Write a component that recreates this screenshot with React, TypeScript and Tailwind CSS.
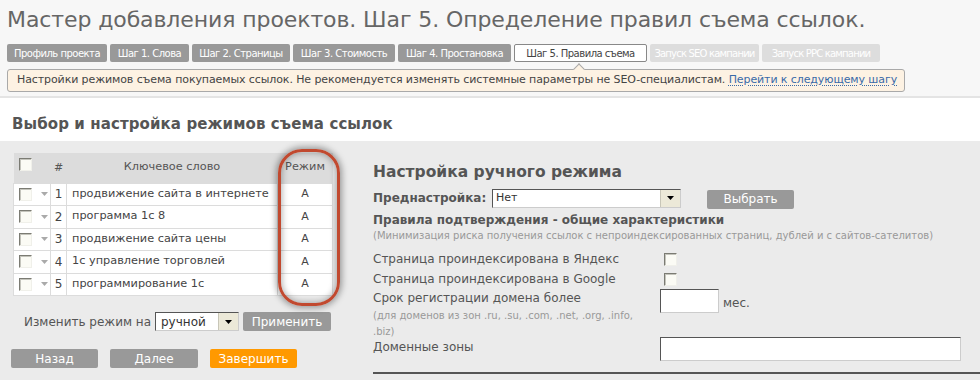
import React from "react";

const font = { fontFamily: '"DejaVu Sans", Verdana, sans-serif' };

const tabs = [
  { label: "Профиль проекта", w: "w-[100px]", kind: "done" },
  { label: "Шаг 1. Слова", w: "w-[79px]", kind: "done" },
  { label: "Шаг 2. Страницы", w: "w-[98px]", kind: "done" },
  { label: "Шаг 3. Стоимость", w: "w-[102px]", kind: "done" },
  { label: "Шаг 4. Простановка", w: "w-[113px]", kind: "done" },
  { label: "Шаг 5. Правила съема", w: "w-[133px]", kind: "active" },
  { label: "Запуск SEO кампании", w: "w-[109px]", kind: "off" },
  { label: "Запуск PPC кампании", w: "w-[118px]", kind: "off" },
];

const keywords = [
  "продвижение сайта в интернете",
  "программа 1с 8",
  "продвижение сайта цены",
  "1с управление торговлей",
  "программирование 1с",
];

function Box() {
  return (
    <span className="inline-block w-[13px] h-[13px] bg-[#fbfbf5] border border-t-[#7b7b73] border-l-[#7b7b73] border-r-[#f0f0ea] border-b-[#f0f0ea] shadow-[inset_1px_1px_0_#c4c4bc]" />
  );
}

function Arrow() {
  return (
    <span className="inline-flex items-center justify-center w-[20px] h-[17px] bg-[#ece9d8] border-l border-[#c8c6b8]">
      <svg width="7" height="4" viewBox="0 0 7 4">
        <path d="M0 0h7L3.5 4z" fill="#000" />
      </svg>
    </span>
  );
}

function KeywordTable() {
  return (
    <div className="relative">
      <table className="w-[320px] border-collapse text-[11.3px] text-[#444]">
        <thead>
          <tr className="bg-[#dcdcdc] h-[30px]">
            <th className="w-[37px] pl-[5px] text-left font-normal">
              <Box />
            </th>
            <th className="w-[16px] font-normal text-[11px] text-[#555]">#</th>
            <th className="font-normal text-[#555]">Ключевое слово</th>
            <th className="w-[55px] font-normal text-[#555]">Режим</th>
          </tr>
        </thead>
        <tbody>
          {keywords.map((k, i) => (
            <tr key={k} className="bg-white h-[22.5px]">
              <td className="border border-[#dcdcdc] pl-[5px]">
                <div className="flex items-center gap-[9px]">
                  <Box />
                  <svg width="7" height="4" viewBox="0 0 7 4">
                    <path d="M0 0h7L3.5 4z" fill="#aaa" />
                  </svg>
                </div>
              </td>
              <td className="border border-[#dcdcdc] text-center text-[12px]">{i + 1}</td>
              <td className="border border-[#dcdcdc] pl-[5px] whitespace-nowrap">{k}</td>
              <td className="border border-[#dcdcdc] text-center text-[11px]">A</td>
            </tr>
          ))}
        </tbody>
      </table>
      <div className="absolute left-[265px] top-[-4px] w-[62px] h-[157px] rounded-[24px] border-[3px] border-[#c1492f] shadow-[0_0_6px_2px_rgba(0,0,0,0.35),inset_0_0_6px_1px_rgba(0,0,0,0.3)]" />
    </div>
  );
}

function GrayButton({ children, w, orange }: { children: React.ReactNode; w: string; orange?: boolean }) {
  return (
    <span
      className={`${w} h-[19px] inline-flex items-center justify-center text-[12px] text-white rounded-[2px] ${
        orange ? "bg-[#ff9900]" : "bg-[#999999]"
      }`}
    >
      {children}
    </span>
  );
}

export default function App() {
  return (
    <div style={font} className="w-[980px] h-[380px] overflow-hidden bg-[#ebebeb] text-[#555]">
      <div className="bg-[#f7f7f7] h-[98px] pl-[7px] pt-[5px] border-b-2 border-[#e4e4e4]">
        <h1 className="text-[22px] leading-[30px] text-[#666] tracking-[-0.1px] whitespace-nowrap">
          Мастер добавления проектов. Шаг 5. Определение правил съема ссылок.
        </h1>
        <div className="flex gap-[3px] mt-[9px]">
          {tabs.map((t) => (
            <span
              key={t.label}
              className={`${t.w} h-[18px] inline-flex items-center justify-center overflow-hidden text-[10px] whitespace-nowrap rounded-[2px] ${
                t.kind === "done"
                  ? "bg-[#999999] text-white tracking-[-0.5px]"
                  : t.kind === "active"
                  ? "bg-white text-[#444] border border-[#888] tracking-[-0.5px]"
                  : "bg-[#dddddd] text-white tracking-[-0.8px]"
              }`}
            >
              {t.label}
            </span>
          ))}
        </div>
        <div className="relative mt-[7px] w-[898px] h-[23px] bg-[#fdf2e3] border border-[#a9a9a9] rounded-[3px] flex items-center pl-[9px] text-[11px] text-[#444] tracking-[-0.1px] whitespace-nowrap">
          <span className="absolute left-[567px] top-[-5px] w-[8px] h-[8px] bg-[#fdf2e3] border-t border-l border-[#a9a9a9] rotate-45" />
          Настройки режимов съема покупаемых ссылок. Не рекомендуется изменять системные параметры не SEO-специалистам.&nbsp;
          <a className="text-[#3a6aa8] underline decoration-dotted underline-offset-2">Перейти к следующему шагу</a>
        </div>
      </div>
      <div className="bg-white h-[43px] pl-[12px] pt-[16px]">
        <h2 className="text-[15px] leading-[20px] font-bold text-[#555] tracking-[0.1px]">Выбор и настройка режимов съема ссылок</h2>
      </div>
      <div className="flex pt-[12px]">
        <div className="w-[373px] pl-[13px]">
          <KeywordTable />
          <div className="flex items-center mt-[16px] pl-[11px] gap-[4px] text-[12px] text-[#555]">
            <span>Изменить режим на</span>
            <span className="w-[84px] h-[19px] bg-white border border-t-[#555] border-l-[#555] border-r-[#ccc] border-b-[#ccc] flex items-center justify-between pl-[5px] text-[12px] text-[#333]">
              ручной
              <Arrow />
            </span>
            <GrayButton w="w-[88px]">Применить</GrayButton>
          </div>
          <div className="flex gap-[12px] mt-[18px] ml-[-2px]">
            <GrayButton w="w-[87px]">Назад</GrayButton>
            <GrayButton w="w-[88px]">Далее</GrayButton>
            <GrayButton w="w-[87px]" orange>
              Завершить
            </GrayButton>
          </div>
        </div>
        <div className="flex-1 pt-[9px]">
          <h3 className="text-[15.5px] font-bold text-[#555] leading-[20px]">Настройка ручного режима</h3>
          <div className="flex items-center mt-[6px] h-[20px]">
            <span className="w-[119px] text-[12px] font-bold text-[#555]">Преднастройка:</span>
            <span className="w-[189px] h-[19px] bg-white border border-t-[#555] border-l-[#555] border-r-[#ccc] border-b-[#ccc] flex items-center justify-between pl-[3px] text-[11px] text-[#333]">
              Нет
              <Arrow />
            </span>
            <span className="ml-[26px]">
              <GrayButton w="w-[87px]">Выбрать</GrayButton>
            </span>
          </div>
          <div className="mt-[4px] text-[12px] font-bold text-[#555] leading-[17px] whitespace-nowrap">
            Правила подтверждения - общие характеристики
          </div>
          <div className="text-[10px] text-[#999] leading-[13px] whitespace-nowrap">
            (Минимизация риска получения ссылок с непроиндексированных страниц, дублей и с сайтов-сателитов)
          </div>
          <div className="grid grid-cols-[287px_1fr] text-[12px] text-[#555] mt-[7px]">
            <div className="leading-[20px]">Страница проиндексирована в Яндекс</div>
            <div className="flex items-center pl-[4px]">
              <Box />
            </div>
            <div className="leading-[20px]">Страница проиндексирована в Google</div>
            <div className="flex items-center pl-[4px]">
              <Box />
            </div>
            <div>
              <div className="leading-[19px]">Срок регистрации домена более</div>
              <div className="text-[10px] text-[#999] leading-[16px] w-[265px]">
                (для доменов из зон .ru, .su, .com, .net, .org, .info, .biz)
              </div>
            </div>
            <div className="flex items-start gap-[4px]">
              <span className="w-[59px] h-[24px] bg-white border border-t-[#555] border-l-[#555] border-r-[#ccc] border-b-[#ccc]" />
              <span className="mt-[5px]">мес.</span>
            </div>
            <div className="leading-[20px] mt-[-3px]">Доменные зоны</div>
            <div className="mt-[-3px]">
              <span className="block w-[301px] h-[24px] bg-white border border-t-[#555] border-l-[#555] border-r-[#ccc] border-b-[#ccc]" />
            </div>
          </div>
          <div className="mt-[11px] border-t-2 border-[#555]" />
        </div>
      </div>
    </div>
  );
}
